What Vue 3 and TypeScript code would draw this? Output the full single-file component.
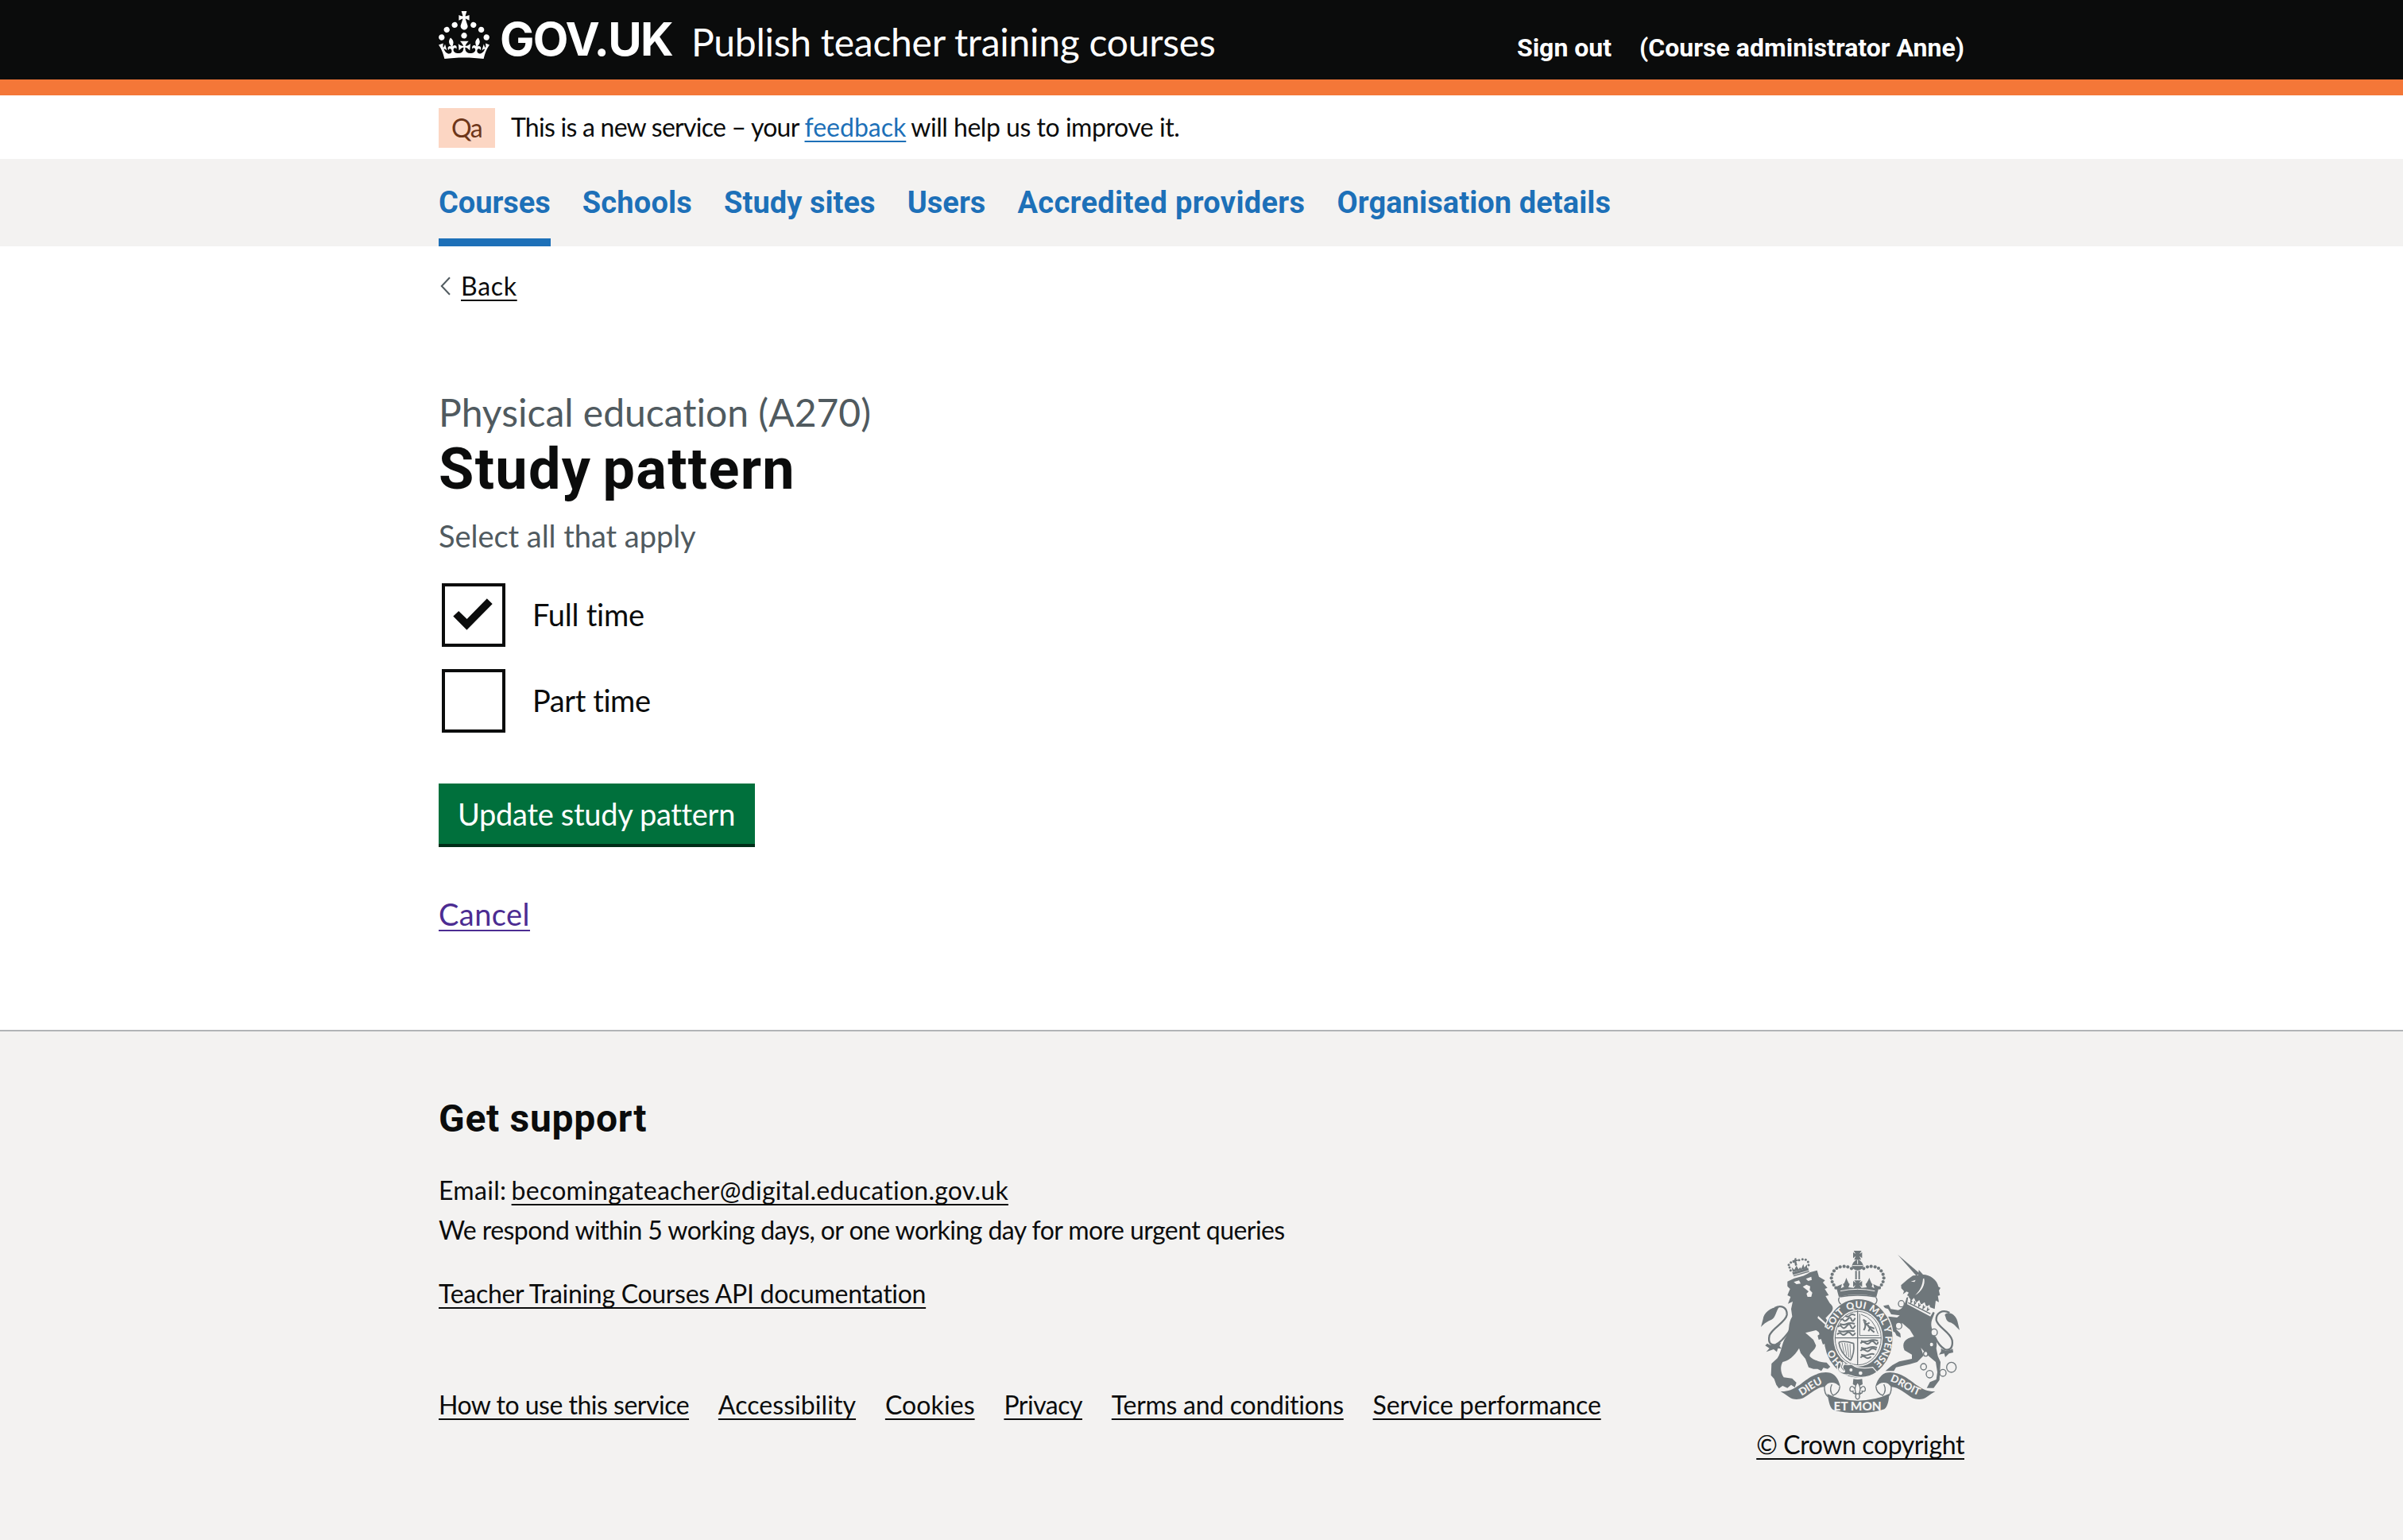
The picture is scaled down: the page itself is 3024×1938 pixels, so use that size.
<script setup lang="ts">
interface Item {
  label: string
  tracking: number
}

const navItems: Item[] = [
  { label: 'Courses', tracking: -0.05 },
  { label: 'Schools', tracking: 0.2 },
  { label: 'Study sites', tracking: 0.05 },
  { label: 'Users', tracking: 0.05 },
  { label: 'Accredited providers', tracking: 0.33 },
  { label: 'Organisation details', tracking: 0.09 },
]

const footerLinks: Item[] = [
  { label: 'How to use this service', tracking: -0.5 },
  { label: 'Accessibility', tracking: 0.07 },
  { label: 'Cookies', tracking: 0.1 },
  { label: 'Privacy', tracking: -0.5 },
  { label: 'Terms and conditions', tracking: -0.27 },
  { label: 'Service performance', tracking: -0.1 },
]

const options = [
  { label: 'Full time', checked: true, tracking: -0.25 },
  { label: 'Part time', checked: false, tracking: -0.42 },
]

const pearls: [number, number][] = [
  [420, 109], [406, 103], [392, 101], [377, 103], [364, 108], [354, 118],
  [347, 131], [344, 145], [347, 159], [353, 171], [361, 182],
]

const smallPearls: [number, number][] = [
  [190, 116], [186, 105], [183, 95], [191, 86], [201, 83],
  [222, 77], [235, 74], [247, 76], [256, 84], [258, 96],
]

const chain: [number, number, number][] = [
  [608, 242, 11], [598, 325, 12], [732, 350, 12], [722, 396, 8], [700, 431, 8],
  [692, 480, 11], [715, 508, 13], [765, 503, 12], [797, 482, 18],
]

const track = (n: number) => ({ letterSpacing: `${n}px` })
</script>

<template>
  <div class="page">
    <header class="header">
      <div class="container header-row">
        <svg class="crown" viewBox="0 0 32 30" aria-hidden="true">
          <path fill="#fff" d="M22.6 10.4c-1 .4-2-.1-2.4-1-.4-.9.1-2 1-2.4.9-.4 2 .1 2.4 1s-.1 2-1 2.4m-5.9 6.7c-.9.4-2-.1-2.4-1-.4-.9.1-2 1-2.4.9-.4 2 .1 2.4 1s-.1 2-1 2.4m10.8-3.7c-1 .4-2-.1-2.4-1-.4-.9.1-2 1-2.4.9-.4 2 .1 2.4 1s0 2-1 2.4m3.3 4.8c-1 .4-2-.1-2.4-1-.4-.9.1-2 1-2.4.9-.4 2 .1 2.4 1s-.1 2-1 2.4M17 4.7l2.3 1.2V2.5l-2.3.7-.2-.2.9-3h-3.4l.9 3-.2.2c-.1.1-2.3-.7-2.3-.7v3.4L15 4.7c.1.1.1.2.2.2l-1.3 4c-.1.2-.1.4-.1.6 0 1.1.8 2 1.9 2.2h.7c1-.2 1.9-1.1 1.9-2.1 0-.2 0-.4-.1-.6l-1.3-4c-.1-.2 0-.2.1-.3m-7.6 5.7c.9.4 2-.1 2.4-1 .4-.9-.1-2-1-2.4-.9-.4-2 .1-2.4 1s0 2 1 2.4m-5 3c.9.4 2-.1 2.4-1 .4-.9-.1-2-1-2.4-.9-.4-2 .1-2.4 1s.1 2 1 2.4m-3.2 4.8c.9.4 2-.1 2.4-1 .4-.9-.1-2-1-2.4-.9-.4-2 .1-2.4 1s0 2 1 2.4m14.8 11c4.4 0 8.6.3 12.3.8 1.1-4.5 2.4-7 3.7-8.8l-2.5-.9c.2 1.3.3 1.9 0 2.7-.4-.4-.8-1.1-1.1-2.3l-1.2 4c.7-.5 1.3-.8 2-.9-1.1 2.5-2.6 3.1-3.5 3-1.1-.2-1.7-1.2-1.5-2.1.3-1.2 1.5-1.5 2.1-.1 1.1-2.3-.8-3-2-2.3 1.9-1.9 2.1-3.5.6-5.6-2.1 1.6-2.1 3.2-1.2 5.5-1.2-1.4-3.2-.6-2.5 1.6.9-1.4 2.1-.5 1.9.8-.2 1.1-1.7 2.1-3.5 1.9-2.7-.2-2.9-2.1-2.9-3.6.7-.1 1.9.5 2.9 1.9l.4-4.3c-1.1 1.1-2.1 1.4-3.2 1.4.4-1.2 2.1-3 2.1-3h-5.4s1.7 1.9 2.1 3c-1.1 0-2.1-.2-3.2-1.4l.4 4.3c1-1.4 2.2-2 2.9-1.9-.1 1.5-.2 3.4-2.9 3.6-1.9.2-3.4-.8-3.5-1.9-.2-1.3 1-2.2 1.9-.8.7-2.3-1.2-3-2.5-1.6.9-2.2.9-3.9-1.2-5.5-1.5 2-1.3 3.7.6 5.6-1.2-.7-3.1 0-2 2.3.6-1.4 1.8-1.1 2.1.1.2.9-.3 1.9-1.5 2.1-.9.2-2.4-.5-3.5-3 .6 0 1.2.3 2 .9l-1.2-4c-.3 1.1-.7 1.9-1.1 2.3-.3-.8-.2-1.4 0-2.7l-2.9.9C1.3 23 2.6 25.5 3.7 30c3.7-.5 7.9-.8 12.3-.8" />
        </svg>
        <span class="logotype">GOV.UK</span>
        <span class="service">Publish teacher training courses</span>
        <span class="account sign-out">Sign out</span>
        <span class="account user">(Course administrator Anne)</span>
      </div>
    </header>

    <div class="container phase">
      <span class="tag">Qa</span>
      <p class="phase-text"><span class="phase-a">This is a new service – your</span><a class="link blue feedback">feedback</a><span class="phase-b">will help us to improve it.</span></p>
    </div>

    <nav class="nav">
      <div class="container nav-row">
        <a v-for="(item, i) in navItems" :key="item.label" class="nav-item" :class="{ current: i === 0 }" :style="track(item.tracking)">{{ item.label }}</a>
      </div>
    </nav>

    <main class="container main">
      <div class="back">
        <svg class="chevron" viewBox="0 0 13 24" aria-hidden="true"><path d="M12 1.2 L1.8 12 L12 22.8" fill="none" stroke="#505a5f" stroke-width="2" /></svg>
        <a class="link back-link">Back</a>
      </div>
      <div class="caption">Physical education (A270)</div>
      <h1 class="title">Study pattern</h1>
      <div class="hint">Select all that apply</div>
      <div class="options">
        <label v-for="o in options" :key="o.label" class="option">
          <span class="box">
            <svg v-if="o.checked" viewBox="0 0 72 72" aria-hidden="true"><path fill="#0b0c0c" d="M10.3 37.6 L17.2 31 L27.6 41 L52.8 15.2 L59.7 22 L27.4 54.7 Z" /></svg>
          </span>
          <span class="option-label" :style="track(o.tracking)">{{ o.label }}</span>
        </label>
      </div>
      <button class="button" type="button">Update study pattern</button>
      <div class="cancel"><a class="link visited">Cancel</a></div>
    </main>

    <footer class="footer">
      <div class="container footer-row">
        <div class="footer-main">
          <h2 class="support">Get support</h2>
          <p class="line"><span class="email-label">Email:</span><a class="link email">becomingateacher@digital.education.gov.uk</a></p>
          <p class="line respond">We respond within 5 working days, or one working day for more urgent queries</p>
          <p class="line docs"><a class="link">Teacher Training Courses API documentation</a></p>
          <div class="footer-links">
            <a v-for="l in footerLinks" :key="l.label" class="link" :style="track(l.tracking)">{{ l.label }}</a>
          </div>
        </div>
        <div class="footer-side">
          <svg class="crest" viewBox="78 42 750 612" aria-hidden="true">
            <defs>
              <path id="garter" d="M446 485 A101 113 0 0 1 446 259 A101 113 0 0 1 446 485" />
              <path id="scroll-left" d="M214 598 C250 584 280 552 335 534" />
              <path id="scroll-right" d="M550 530 C600 542 630 576 690 594" />
            </defs>

            <!-- lion -->
            <g class="ink">
              <path d="M178 158 L204 146 Q245 138 262 124 L290 116 L297 140 L320 154 L312 162 L329 182 L319 186 L334 210 L322 213 L338 240 C350 250 356 262 338 280 L322 296 L344 326 L354 360 L350 400 L338 392 L332 400 L324 388 L312 392 L308 374 L296 378 L292 362 L304 354 L286 342 L246 352 L276 378 L286 400 C282 420 262 424 262 440 C275 455 300 462 326 464 L340 480 L330 488 L314 484 L306 496 L292 488 L276 488 L258 482 L246 450 L228 428 L222 410 C205 440 180 458 160 462 C150 480 152 502 164 520 L196 524 L212 540 L206 558 L192 548 L178 560 L160 552 L146 562 L136 548 L128 526 L116 512 L118 468 L140 448 C158 420 156 390 172 368 C190 340 178 318 196 290 L192 262 L198 234 L180 242 L190 216 L178 210 L188 186 L178 176 Z" />
              <path d="M146 255 C118 252 88 276 86 300 L78 330 C92 314 104 308 118 302 C134 294 134 272 146 255 Z" />
              <path d="M102 392 C110 400 132 402 154 388 L148 402 L156 412 L142 410 L138 424 L126 414 L98 424 L110 410 L94 400 Z" />
            </g>
            <path class="outline" stroke-width="7" d="M130 258 C156 244 178 258 176 284 C172 312 122 332 110 362 C104 390 116 402 134 396 C158 386 176 356 190 340" />
            <g class="paper">
              <path d="M202 160 L222 154 L228 166 L212 168 Z" />
              <path d="M248 148 L268 140 L270 152 L256 156 Z" />
              <path d="M236 178 L250 170 L264 176 L262 190 L272 200 L268 216 L254 216 L250 204 L258 196 Z" />
              <path d="M294 288 L342 332 L338 336 L292 296 Z" />
            </g>
            <g class="ink">
              <path d="M196 124 L256 106 L260 122 L202 139 Z" />
              <path d="M206 70 l6 0 l-1 6 l6 -1 l0 6 l-6 0 l4 16 l-8 2 l-3 -16 l-6 1 l-1 -6 l7 -1 Z" />
              <circle v-for="p in smallPearls" :key="p.join()" :cx="p[0]" :cy="p[1]" r="4.5" />
              <path d="M198 122 L194 104 L204 114 L212 98 L220 112 L226 104 L230 110 L238 92 L242 106 L252 94 L252 108 Z" />
            </g>
            <path class="cut" stroke-width="2.5" d="M200 134 L258 117" />

            <!-- unicorn -->
            <g class="ink">
              <path d="M594 56 L678 128 L664 136 Z" />
              <path d="M608 184 L607 172 L632 150 L652 136 L672 134 L674 114 L690 132 C716 132 744 152 748 178 L756 182 L750 192 L754 210 L746 212 L750 236 L738 230 L734 262 L626 222 L646 206 C640 214 634 214 630 210 L636 200 L628 196 L614 206 L618 194 Z" />
              <path d="M628 218 C622 246 612 262 596 266 L568 262 L560 246 L540 250 L546 258 L558 262 L570 282 L602 286 L592 294 L560 290 L550 304 L566 318 L572 344 L584 350 L590 362 L606 370 L604 354 L590 340 L590 322 L612 316 L640 340 L656 366 C622 372 608 390 620 418 L648 434 L648 450 L600 460 L574 474 L562 484 L548 496 L580 496 L588 482 L640 470 L668 462 L692 438 L682 408 C696 428 718 446 738 462 L744 500 L740 528 L716 538 L704 560 L730 560 L752 530 L756 462 L746 440 L740 410 C748 380 728 356 722 330 C718 306 728 296 734 276 Z" />
              <path d="M772 284 C784 268 812 280 820 308 L828 342 C814 328 806 316 790 312 C776 306 778 296 772 284 Z" />
              <path d="M758 410 C770 420 786 422 802 412 L804 426 L788 430 L774 444 L770 430 L750 434 L758 422 Z" />
            </g>
            <path class="outline" stroke-width="7" d="M790 276 C764 262 738 276 740 304 C746 332 792 348 800 380 C804 410 790 420 772 414 C752 402 742 384 734 366" />
            <g class="paper">
              <path d="M634 214 L646 230 L656 220 L664 238 L676 228 L682 246 L696 236 L702 254 L714 246 L718 260 L734 262 L718 290 L630 244 Z" />
              <path d="M644 158 L662 152 L658 160 Z" />
              <path d="M694 146 C700 170 684 196 660 210 L664 206 C680 190 688 172 690 148 Z" />
            </g>
            <path class="outline" stroke-width="4" d="M634 238 L718 280 M644 226 l0 12 l5 -7 M658 232 l0 12 l6 -7 M674 240 l0 12 l7 -7 M692 248 l-2 12 l8 -7 M708 256 l-2 12 l8 -6" />
            <template v-for="c in chain" :key="c.join()">
              <ellipse :cx="c[0]" :cy="c[1]" :rx="c[2]" :ry="c[2] + 1" class="link-ring" />
            </template>

            <!-- royal crown -->
            <g class="ink">
              <path d="M428 42 H458 L450 54 L460 48 V70 L450 62 L456 76 H430 L436 62 L426 70 V48 L436 54 Z" />
              <path d="M443 74 C458 80 464 92 464 100 C462 110 454 116 443 116 C432 116 424 110 422 100 C422 92 428 80 443 74 Z" />
              <template v-for="p in pearls" :key="p.join()">
                <circle :cx="p[0]" :cy="p[1]" r="6.2" /><circle :cx="886 - p[0]" :cy="p[1]" r="6.2" />
              </template>
              <path d="M434 118 h6 v32 h-6z M446 118 h6 v32 h-6z" />
              <path d="M362 178 L384 168 L380 184 L392 178 Q384 164 392 166 Q398 154 400 144 Q404 154 410 166 Q416 164 408 180 L428 182 L436 172 L426 178 V156 L438 164 L430 154 H456 L448 164 L460 156 V178 L450 172 L458 182 L478 180 Q470 164 476 166 Q484 154 487 144 Q490 154 496 166 Q502 164 496 178 L506 184 L502 168 L524 178 L514 216 Q443 198 372 216 Z" />
            </g>
            <path class="cut" stroke-width="3" d="M424 98 H462 M443 76 V92 M378 194 Q443 180 508 194" />

            <!-- garter and shield -->
            <ellipse class="garter" cx="446" cy="373" rx="131" ry="150" />
            <path class="outline" stroke-width="4" d="M374 218 Q366 232 380 244 M512 218 Q522 232 508 244 M376 216 Q443 204 512 216" />
            <ellipse class="paper" cx="445" cy="372" rx="93" ry="107" />
            <ellipse class="outline" stroke-width="3" cx="445" cy="372" rx="87" ry="101" />
            <g class="motto">
              <text><textPath href="#garter" startOffset="14.5%">HO</textPath></text>
              <text><textPath href="#garter" startOffset="35.3%">SOIT</textPath></text>
              <text><textPath href="#garter" startOffset="48.8%">QUI</textPath></text>
              <text><textPath href="#garter" startOffset="64%">MAL Y</textPath></text>
              <text><textPath href="#garter" startOffset="82.3%">PENSE</textPath></text>
            </g>
            <path class="ink" d="M290 330 L318 330 L336 342 L348 380 L344 402 L336 394 L330 404 L322 392 L312 396 Z" />
            <path class="outline" stroke-width="4" d="M443 268 V474 M358 371 H532" />
            <path class="outline" stroke-width="3" d="M451 280 V362 H524 M456 282 Q504 296 520 356" />
            <g class="outline" stroke-width="6">
              <path d="M378 304 q6 -8 12 0 t16 -4 t14 2 t14 -6 M396 288 q10 6 18 -2 t20 0" />
              <path d="M368 330 q8 -10 16 0 t18 -4 t16 2 t16 -4 M376 318 q14 6 26 0 t30 0" />
              <path d="M366 358 q8 -10 16 -2 t18 -2 t18 2 t16 -4 M370 344 q14 6 28 2 t34 0" />
              <path d="M454 392 q8 -10 18 -2 t18 -2 t18 2 t12 -4 M456 382 q16 6 30 0 t34 0" />
              <path d="M454 420 q8 -10 18 -2 t18 -2 t24 0 M456 408 q16 6 30 0 t30 0" />
              <path d="M454 446 q8 -10 18 -2 t22 -2 M456 434 q16 6 30 0 t20 0" />
              <path d="M466 342 q10 -14 4 -28 q14 8 20 22 q8 8 16 14 M470 322 l18 -8 M484 346 l8 -16 l14 6 M464 302 l12 8" />
            </g>
            <path class="outline" stroke-width="5" d="M372 388 Q390 380 428 392 M372 388 Q378 430 416 456 M428 392 Q432 430 416 456" />
            <path class="outline" stroke-width="2.5" d="M384 390 L392 428 M394 390 L402 438 M404 392 L410 444 M414 394 L417 446" />

            <path class="garter" d="M372 462 Q396 476 420 470 Q446 492 500 482 L516 500 Q470 534 408 510 Q380 512 368 492 Q364 476 372 462 Z" />
            <path class="paper" d="M378 464 Q394 456 396 470 Q386 476 390 488 Q400 494 394 502 Q376 504 370 488 Q382 480 378 464 Z" />
            <path class="outline" stroke-width="3" d="M376 456 Q392 462 384 474 Q378 484 392 494" />
            <g class="paper"><circle cx="418" cy="492" r="6" /><circle cx="454" cy="504" r="7" /></g>

            <!-- pendant fleur-de-lis -->
            <path class="ink" d="M427 526 Q443 530 460 526 L462 546 L450 552 L443 538 L436 552 L425 546 Z" />
            <path class="outline" stroke-width="4" d="M443 538 Q428 558 436 578 Q424 584 426 572 Q412 576 414 562 Q420 546 432 562 M443 538 Q458 558 450 578 Q462 584 460 572 Q474 576 472 562 Q466 546 454 562 M430 582 H456 M437 584 Q432 598 443 603 Q454 598 449 584" />

            <!-- scroll -->
            <g class="ink">
              <path d="M152 573 C202 576 232 538 266 518 C300 500 334 494 356 512 C370 526 374 540 378 556 L362 544 Q346 536 330 544 L318 556 C290 556 262 584 238 598 C218 606 196 604 184 594 Q168 582 152 573 Z" />
              <path d="M736 573 C688 576 656 538 622 518 C590 500 554 494 534 512 C520 526 514 540 510 556 L526 544 Q542 536 558 544 L570 556 C598 556 626 584 650 598 C670 606 692 604 704 594 Q720 582 736 573 Z" />
              <path d="M328 582 Q380 608 443 608 Q508 608 562 582 C562 604 556 632 544 640 Q500 655 443 655 Q388 655 350 642 C336 632 334 604 328 582 Z" />
            </g>
            <path class="outline" stroke-width="4" d="M318 552 Q316 582 332 594 M346 546 Q334 570 350 588 Q374 580 376 554 M570 552 Q572 582 556 594 M542 546 Q554 570 538 588 Q514 580 512 554" />
            <g class="motto scroll-text">
              <text><textPath href="#scroll-left" startOffset="48%">DIEU</textPath></text>
              <text><textPath href="#scroll-right" startOffset="49%">DROIT</textPath></text>
              <text x="443" y="645" class="mon">ET MON</text>
            </g>
          </svg>
          <a class="link copyright">© Crown copyright</a>
        </div>
      </div>
    </footer>
  </div>
</template>

<style>
body {
  margin: 0;
  background: #f3f2f1;
}
</style>

<style scoped>
.page {
  display: flex;
  flex-direction: column;
  min-height: 100vh;
  background: #fff;
  color: #0b0c0c;
  font-family: Lato, 'Noto Sans', sans-serif;
  font-size: 32px;
  font-variant-ligatures: none;
}
.container {
  box-sizing: border-box;
  width: 1920px;
  margin: 0 auto;
}
p,
h1,
h2 {
  margin: 0;
}
.link {
  text-decoration: underline;
  text-decoration-thickness: 2px;
  text-underline-offset: 5px;
  text-decoration-skip-ink: none;
}
.header {
  height: 100px;
  background: #0b0c0c;
  border-bottom: 20px solid #f47738;
  color: #fff;
}
.header-row {
  display: flex;
  align-items: flex-start;
  white-space: nowrap;
}
.crown {
  width: 64px;
  height: 60px;
  margin-top: 14px;
}
.logotype {
  width: 222px;
  margin: 19px 0 0 13px;
  font: 700 58px/60px Inter, 'Noto Sans', sans-serif;
  letter-spacing: -1.7px;
}
.service {
  margin: 23px 0 0 19px;
  font-size: 48px;
  line-height: 60px;
  letter-spacing: -0.26px;
}
.account {
  margin-top: 40px;
  font-family: Roboto, sans-serif;
  font-weight: 700;
  line-height: 40px;
}
.sign-out {
  margin-left: auto;
}
.user {
  margin-left: 35px;
  letter-spacing: 0.02px;
}
.phase {
  display: flex;
  align-items: flex-start;
  height: 80px;
}
.tag {
  box-sizing: border-box;
  width: 71px;
  height: 50px;
  margin-top: 16px;
  padding-left: 16px;
  background: #fcd6c3;
  color: #6e3619;
  line-height: 49px;
  letter-spacing: -1.5px;
}
.phase-text {
  display: flex;
  margin: 15px 0 0 20px;
  line-height: 50px;
  white-space: nowrap;
}
.phase-a {
  width: 369.5px;
  letter-spacing: -0.75px;
}
.feedback {
  letter-spacing: 0;
}
.phase-b {
  margin-left: 6px;
  letter-spacing: -0.47px;
}
.blue {
  color: #1d70b8;
}
.nav {
  height: 110px;
  background: #f3f2f1;
}
.nav-row {
  display: flex;
  gap: 40px;
}
.nav-item {
  padding-top: 10px;
  border-bottom: 10px solid transparent;
  color: #1d70b8;
  font: 700 38px/90px Roboto, sans-serif;
  white-space: nowrap;
}
.nav-item.current {
  border-color: #1d70b8;
}
.main {
  display: flex;
  flex-direction: column;
  align-items: flex-start;
  padding: 30px 0 122px;
}
.back {
  display: flex;
  align-items: flex-start;
  line-height: 40px;
}
.chevron {
  width: 13px;
  height: 24px;
  margin: 8px 13px 0 2px;
}
.back-link {
  letter-spacing: 0.7px;
}
.caption {
  margin-top: 109px;
  color: #505a5f;
  font-size: 48px;
  line-height: 60px;
}
.title {
  margin-top: 2px;
  font: 700 72px/80px Roboto, sans-serif;
  letter-spacing: 1.3px;
  word-spacing: -5px;
}
.hint {
  margin-top: 18px;
  color: #505a5f;
  font-size: 38px;
  line-height: 50px;
  letter-spacing: -0.04px;
}
.options {
  display: flex;
  flex-direction: column;
  gap: 28px;
  margin-top: 35px;
}
.option {
  display: flex;
  height: 80px;
  margin-left: 4px;
  font-size: 38px;
  line-height: 79px;
}
.box {
  box-sizing: border-box;
  width: 80px;
  height: 80px;
  border: 4px solid #0b0c0c;
}
.box svg {
  display: block;
}
.option-label {
  margin-left: 34px;
}
.button {
  width: 398px;
  height: 76px;
  margin: 64px 0 0;
  padding: 0 0 0 24px;
  border: 0;
  background: #00703c;
  box-shadow: 0 4px 0 #002d18;
  color: #fff;
  font: 400 38px/76px Lato, sans-serif;
  letter-spacing: -0.3px;
  text-align: left;
}
.cancel {
  margin-top: 63px;
  font-size: 38px;
  line-height: 50px;
  letter-spacing: 0.45px;
}
.visited {
  color: #4c2c92;
}
.cancel + * {
  margin-top: -1px;
}
.main {
  padding-bottom: 121px;
}
.footer {
  flex: 1;
  border-top: 2px solid #b1b4b6;
  background: #f3f2f1;
}
.footer-row {
  display: flex;
  justify-content: space-between;
  padding-top: 80px;
}
.support {
  margin-bottom: 35px;
  font: 700 48px/60px Roboto, sans-serif;
  letter-spacing: 0.7px;
}
.line {
  line-height: 50px;
  white-space: nowrap;
}
.email-label {
  display: inline-block;
  width: 91.6px;
  letter-spacing: 0.3px;
}
.email {
  letter-spacing: 0.26px;
}
.respond {
  letter-spacing: -0.56px;
}
.docs {
  margin-top: 30px;
  letter-spacing: -0.29px;
}
.footer-links {
  display: flex;
  gap: 36.8px;
  margin-top: 90px;
  line-height: 50px;
  white-space: nowrap;
}
.footer-side {
  display: flex;
  flex-direction: column;
  align-items: flex-end;
  padding-top: 196px;
}
.crest {
  width: 250px;
  height: 204px;
  margin-right: 6px;
}
.copyright {
  margin-top: 15px;
  line-height: 50px;
  letter-spacing: -0.39px;
  white-space: nowrap;
}
.ink {
  fill: #6f777b;
}
.paper {
  fill: #f3f2f1;
}
.garter {
  fill: #6f777b;
  stroke: #f3f2f1;
  stroke-width: 4;
}
.outline {
  fill: none;
  stroke: #6f777b;
}
.cut {
  fill: none;
  stroke: #f3f2f1;
}
.link-ring {
  fill: #f3f2f1;
  stroke: #6f777b;
  stroke-width: 4;
}
.motto {
  fill: #f3f2f1;
  font: 900 37px Lato, sans-serif;
  text-anchor: middle;
}
.motto.scroll-text {
  font-size: 39px;
}
.mon {
  font-size: 46px;
}
</style>
